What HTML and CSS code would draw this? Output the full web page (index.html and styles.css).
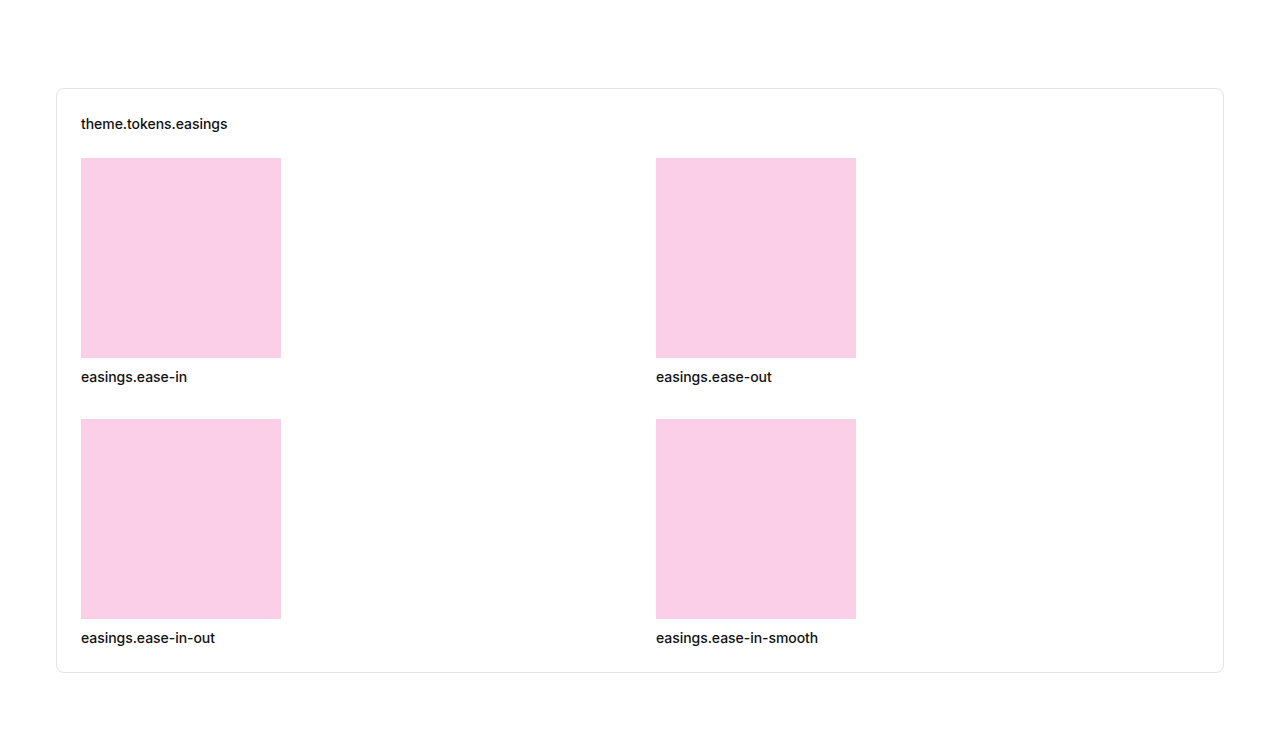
FILE: index.html
```html
<!DOCTYPE html>
<html lang="en">
<head>
<meta charset="utf-8">
<title>theme.tokens.easings</title>
<link rel="stylesheet" href="styles.css">
</head>
<body>
<div class="page">
  <section class="card">
    <h2 class="title">theme.tokens.easings</h2>
    <div class="grid">
      <div class="item"><div class="swatch"></div><div class="label">easings.ease-in</div></div>
      <div class="item"><div class="swatch"></div><div class="label">easings.ease-out</div></div>
      <div class="item"><div class="swatch"></div><div class="label">easings.ease-in-out</div></div>
      <div class="item"><div class="swatch"></div><div class="label">easings.ease-in-smooth</div></div>
    </div>
  </section>
</div>
</body>
</html>
```
FILE: styles.css
```css
html, body {
  margin: 0;
  padding: 0;
  background: #ffffff;
}
body {
  font-family: Inter, "Noto Sans", sans-serif;
  color: #111113;
}
.page {
  padding: 88px 56px;
}
.card {
  border: 1px solid #e4e4e7;
  border-radius: 8px;
  padding: 24px;
  background: #fff;
}
.title {
  margin: 0 0 24px;
  font-size: 14px;
  font-weight: 500;
  line-height: 21px;
  letter-spacing: -0.05px;
}
.grid {
  display: grid;
  grid-template-columns: 1fr 1fr;
  gap: 32px;
}
.item {
  display: flex;
  flex-direction: column;
  gap: 8px;
}
.swatch {
  width: 200px;
  height: 200px;
  background: #fbcfe8;
}
.label {
  font-size: 14px;
  font-weight: 500;
  line-height: 21px;
  letter-spacing: -0.05px;
}
```
